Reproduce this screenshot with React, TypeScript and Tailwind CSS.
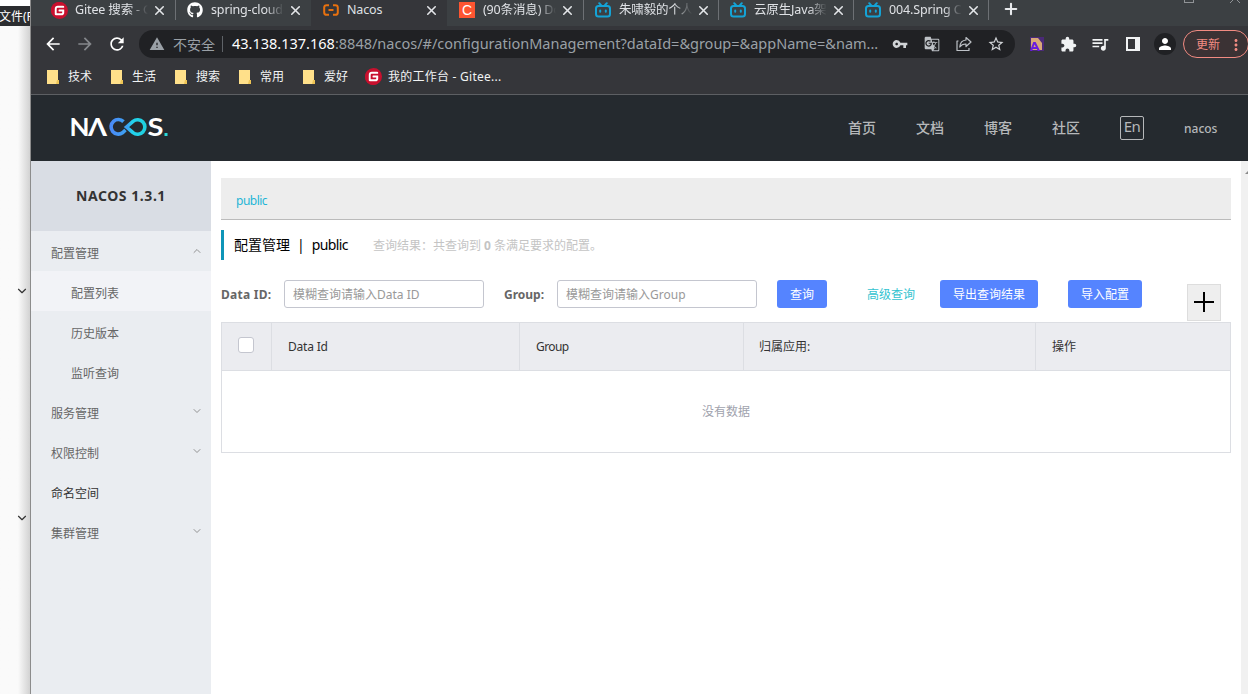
import * as React from "react";
import clsx from "clsx";
import { ChevronDown, ChevronUp, Plus, X } from "lucide-react";
import { FaGithub } from "react-icons/fa";
import {
  MdArrowBack,
  MdArrowForward,
  MdExtension,
  MdGTranslate,
  MdMoreVert,
  MdPerson,
  MdQueueMusic,
  MdRefresh,
  MdStarBorder,
  MdVpnKey,
  MdWarning,
} from "react-icons/md";
import { SiGitee } from "react-icons/si";

function GiteeIcon() {
  return (
    <span className="flex size-4 shrink-0 items-center justify-center rounded-full bg-[#c8102e]">
      <span className="flex size-[13px] items-center justify-center rounded-full bg-white">
        <SiGitee className="size-[17px] shrink-0 text-[#c8102e]" />
      </span>
    </span>
  );
}

function NacosIcon() {
  return (
    <svg viewBox="0 0 16 16" className="size-4 shrink-0" fill="none" stroke="#e8710f" strokeWidth="2">
      <path d="M6 3.2H3.6Q1.2 3.2 1.2 5.6v4.8q0 2.4 2.4 2.4H6M10 3.2h2.4q2.4 0 2.4 2.4v4.8q0 2.4-2.4 2.4H10M5.5 8h5" />
    </svg>
  );
}

function CsdnIcon() {
  return (
    <span className="flex size-4 shrink-0 items-center justify-center bg-[#fc5531] font-['Liberation_Sans'] text-[14px] leading-none text-white">
      C
    </span>
  );
}

function BiliIcon() {
  return (
    <svg viewBox="0 0 16 16" className="size-4 shrink-0" fill="none" stroke="#14a3d6" strokeWidth="2" strokeLinecap="round">
      <rect x="1" y="4" width="14" height="10.5" rx="2.5" />
      <path d="M4.2 1.2 6 3.2M11.8 1.2 10 3.2M5.2 8.4v1.4M10.8 8.4v1.4" />
    </svg>
  );
}

function ShareIcon() {
  return (
    <svg viewBox="0 0 16 16" className="size-4" fill="none" stroke="#bdc1c6" strokeWidth="1.2" strokeLinejoin="round">
      <path d="M2.5 5H1v9.5h12V12" />
      <path d="M10 1.5 15 6l-5 4.5V8Q6 7.8 3.8 11 4.3 4.4 10 4Z" />
    </svg>
  );
}

function FolderIcon() {
  return (
    <svg viewBox="0 0 12 14" className="h-[14px] w-3" fill="#ffe08a">
      <path d="M0 0h11v10h1v4H0Z" />
      <path d="M10 10h2v4h-3Z" fill="#eec455" />
    </svg>
  );
}

function NacosLogo() {
  return (
    <svg viewBox="0 0 98 20" className="mb-[2px] h-5 w-[98px]">
      <defs>
        <linearGradient id="loop" gradientUnits="userSpaceOnUse" x1="37" x2="77" y1="0" y2="0">
          <stop offset="0" stopColor="#4d86f7" />
          <stop offset="0.5" stopColor="#3ba4f2" />
          <stop offset="0.6" stopColor="#22d3ee" />
          <stop offset="1" stopColor="#1ecfdc" />
        </linearGradient>
      </defs>
      <g fill="#fff" fontFamily="Lato, sans-serif" fontWeight="700" fontSize="25">
        <text x="-1.5" y="19" textLength="20" lengthAdjust="spacingAndGlyphs">N</text>
        <text x="17" y="19" textLength="19" lengthAdjust="spacingAndGlyphs">Λ</text>
        <text x="76.5" y="19" textLength="16" lengthAdjust="spacingAndGlyphs">S</text>
      </g>
      <g fill="none" stroke="url(#loop)" strokeWidth="3.6">
        <path d="M52.5 4.6A7.3 7.3 0 1 0 51.5 15.8L54.5 13" />
        <path d="M55.5 10 62 4.3A7.3 7.3 0 1 1 62 15.7Z" />
      </g>
      <rect x="93.5" y="16" width="3" height="3" fill="#2bd9d9" />
    </svg>
  );
}

const tabs: { title: string; icon: React.ReactNode; width: string; active?: boolean; divider?: boolean }[] = [
  { title: "Gitee 搜索 - G", icon: <GiteeIcon />, width: "w-[136px]" },
  { title: "spring-cloud-", icon: <FaGithub className="size-4 shrink-0 text-white" />, width: "w-[136px]", divider: true },
  { title: "Nacos", icon: <NacosIcon />, width: "w-[136px]", active: true },
  { title: "(90条消息) Do", icon: <CsdnIcon />, width: "w-[136px]" },
  { title: "朱啸毅的个人空", icon: <BiliIcon />, width: "w-[135px]", divider: true },
  { title: "云原生Java架构", icon: <BiliIcon />, width: "w-[135px]", divider: true },
  { title: "004.Spring Cl", icon: <BiliIcon />, width: "w-[135px]", divider: true },
];

const bookmarks = ["技术", "生活", "搜索", "常用", "爱好"];

const menu: { title: string; sub?: boolean; active?: boolean; dark?: boolean; arrow?: "up" | "down" }[] = [
  { title: "配置管理", arrow: "up" },
  { title: "配置列表", sub: true, active: true },
  { title: "历史版本", sub: true },
  { title: "监听查询", sub: true },
  { title: "服务管理", arrow: "down" },
  { title: "权限控制", arrow: "down" },
  { title: "命名空间", dark: true },
  { title: "集群管理", arrow: "down" },
];

function TabStrip() {
  return (
    <div className="flex h-[26px] bg-[#3c4043] pl-2">
      {tabs.map((tab) => (
        <div
          key={tab.title}
          className={clsx("relative flex pb-[6px] pl-3", tab.width, tab.active && "bg-[#35363a]")}
        >
          {tab.divider && <span className="absolute top-0 left-0 h-5 w-px bg-[#6d7074]" />}
          <div className="flex h-5 items-center">
            {tab.icon}
            <span
              className={clsx(
                "ml-2 h-5 w-[73px] overflow-hidden text-[12.5px] leading-5 tracking-[-0.15px] whitespace-nowrap text-[#dfe1e5]",
                !tab.active && "mask-r-from-75% mask-r-to-100%"
              )}
            >
              {tab.title}
            </span>
            <X className="ml-1 size-[15px] text-[#e4e6e9]" strokeWidth={2.5} />
          </div>
        </div>
      ))}
      <div className="relative flex h-5 w-[140px] items-center pl-[14px]">
        <span className="absolute top-0 left-0 h-5 w-px bg-[#6d7074]" />
        <Plus className="mb-[2px] size-[18px] text-[#e8eaed]" strokeWidth={2.8} />
      </div>
      {/* lower edges of the window buttons */}
      <div className="ml-[56px] flex h-[3px]">
        <span className="h-[3px] w-[10px] border border-t-0 border-[#909396]" />
        <svg viewBox="0 0 10 3" className="ml-9 h-[3px] w-[10px]" stroke="#909396" fill="none">
          <path d="M0 3 3 0M10 3 7 0" />
        </svg>
      </div>
    </div>
  );
}

function Toolbar() {
  return (
    <div className="flex h-9 items-center bg-[#35363a] pl-3">
      <MdArrowBack className="size-5 shrink-0 text-white" />
      <MdArrowForward className="ml-3 size-5 shrink-0 text-[#85888c]" />
      <MdRefresh className="ml-3 size-5 shrink-0 text-white" />
      <div className="ml-3 flex h-7 w-[876px] shrink-0 items-center rounded-full bg-[#202124] pl-[10px] whitespace-nowrap">
        <MdWarning className="size-4 text-[#9aa0a6]" />
        <span className="ml-2 w-[43px] text-[14px] text-[#9aa0a6]">不安全</span>
        <span className="ml-[6px] h-4 w-px bg-[#5f6368]" />
        <span className="ml-[9px] w-[660px] text-[14.5px] text-[#9aa0a6]">
          <span className="text-white">43.138.137.168</span>
          :8848/nacos/#/configurationManagement?dataId=&amp;group=&amp;appName=&amp;nam...
        </span>
        <MdVpnKey className="size-4 text-[#d0d3d6]" />
        <MdGTranslate className="ml-4 size-4 text-[#bdc1c6]" />
        <span className="ml-4">
          <ShareIcon />
        </span>
        <MdStarBorder className="ml-[15px] size-[18px] text-[#d0d3d6]" />
      </div>
      <svg viewBox="0 0 14 14" className="ml-[15px] size-[14px] shrink-0">
        <rect width="14" height="14" fill="#4b2a78" />
        <path d="M1 1h7l4 5v7H1Z" fill="#d9a878" />
        <path d="M1 14 4 6h1l4 8M2 11h5" fill="none" stroke="#6a1be0" strokeWidth="2" />
      </svg>
      <MdExtension className="ml-4 size-[17px] shrink-0 text-[#f1f3f4]" />
      <MdQueueMusic className="ml-[13px] size-5 shrink-0 text-[#f1f3f4]" />
      <span className="ml-4 h-[14px] w-[14px] shrink-0 border-2 border-r-[5px] border-[#f1f3f4]" />
      <span className="ml-[14px] flex size-[22px] shrink-0 items-center justify-center rounded-full bg-[#202124]">
        <MdPerson className="size-[18px] text-white" />
      </span>
      <span className="ml-[7px] flex h-7 w-[66px] shrink-0 items-center rounded-full border border-[#f28b82] bg-[#3b3234] pt-px pl-3 text-[12px] text-[#f28b82]">
        更新
        <MdMoreVert className="ml-[7px] size-[18px] shrink-0" />
      </span>
    </div>
  );
}

function Bookmarks() {
  return (
    <div className="flex h-[33px] items-center border-b border-[#5d5f63] bg-[#35363a] pb-[3px] pl-4 text-[12px] text-[#f1f3f4]">
      {bookmarks.map((name) => (
        <div key={name} className="flex w-16 items-center gap-[9px]">
          <FolderIcon />
          <span className="pt-px">{name}</span>
        </div>
      ))}
      <span className="-ml-[2px]">
        <GiteeIcon />
      </span>
      <span className="ml-[7px] pt-px tracking-[0.25px] whitespace-nowrap">我的工作台 - Gitee...</span>
    </div>
  );
}

function Header() {
  return (
    <header className="flex h-[66px] items-center bg-[#252a2f] pl-10 text-[14px] text-[#b6b8ba]">
      <NacosLogo />
      <nav className="ml-[679px] flex items-center gap-10 font-medium whitespace-nowrap">
        <span className="pb-[2px]">首页</span>
        <span className="pb-[2px]">文档</span>
        <span className="pb-[2px]">博客</span>
        <span className="pb-[2px]">社区</span>
        <span className="flex size-6 items-center justify-center rounded-[2px] border border-[#b6b8ba] pb-1 text-[15px] font-normal tracking-[-0.5px]">
          En
        </span>
        <span className="pt-[2px] text-[12px]">nacos</span>
      </nav>
    </header>
  );
}

function Sidebar() {
  return (
    <aside className="w-[180px] shrink-0 bg-[#eaedf1] text-[12px]">
      <div className="flex h-[70px] items-center justify-center bg-[#d9dde4] pb-px text-[14px] font-bold tracking-[0.55px] text-[#333]">
        NACOS 1.3.1
      </div>
      {menu.map((item) => (
        <div
          key={item.title}
          className={clsx(
            "flex h-10 items-center justify-between pr-2",
            item.sub ? "pl-10" : "pl-5",
            item.active && "bg-[#f2f3f7]",
            item.dark ? "text-[#333]" : "text-[#666]"
          )}
        >
          <span className="pt-[5px]">{item.title}</span>
          {item.arrow === "up" && <ChevronUp className="size-3 text-[#888]" strokeWidth={1.8} />}
          {item.arrow === "down" && <ChevronDown className="size-3 text-[#888]" strokeWidth={1.8} />}
        </div>
      ))}
    </aside>
  );
}

function SearchBar() {
  const button = "h-7 rounded-[3px] bg-[#5584ff] pt-px text-white";
  const input = "h-7 w-[200px] rounded-[3px] border border-[#c4c6cf] px-2 pt-[2px] placeholder:text-[#999]";
  return (
    <div className="mt-5 flex h-[42px] items-start leading-[30px] text-[#666]">
      <label className="w-[63px] font-bold tracking-[0.25px]">Data ID:</label>
      <input className={input} placeholder="模糊查询请输入Data ID" />
      <label className="ml-5 w-[53px] font-bold">Group:</label>
      <input className={input} placeholder="模糊查询请输入Group" />
      <button className={clsx(button, "ml-5 w-[50px] leading-[26px]")}>查询</button>
      <a className="ml-10 text-[#33c3d0]">高级查询</a>
      <button className={clsx(button, "ml-[25px] w-[98px] leading-[26px]")}>导出查询结果</button>
      <button className={clsx(button, "ml-[30px] w-[74px] leading-[26px]")}>导入配置</button>
      <button className="mt-1 ml-[45px] flex h-[37px] w-[34px] items-center justify-center border border-[#ddd] bg-[#eee] pb-[2px] text-black">
        <svg viewBox="0 0 20 20" className="size-5" stroke="currentColor" strokeWidth="2">
          <path d="M0 10h20M10 0v20" />
        </svg>
      </button>
    </div>
  );
}

function ConfigTable() {
  return (
    <div className="h-[131px] w-[1010px] border border-[#dcdee3]">
      <div className="flex h-[47px] bg-[#ebecf0] leading-[48px] text-[#333]">
        <div className="w-[50px] border-r border-[#dcdee3] pt-[14px] pl-4">
          <span className="block size-4 rounded-[3px] border border-[#c4c6cf] bg-white" />
        </div>
        <div className="w-[248px] border-r border-[#dcdee3] pl-4 tracking-[-0.2px]">Data Id</div>
        <div className="w-[224px] border-r border-[#dcdee3] pl-4 tracking-[-0.6px]">Group</div>
        <div className="w-[292px] border-r border-[#dcdee3] pl-[15px]">归属应用:</div>
        <div className="pl-4">操作</div>
      </div>
      <div className="h-[82px] border-t border-[#dcdee3] text-center leading-[81px] text-[#a0a2ad]">没有数据</div>
    </div>
  );
}

export default function App() {
  return (
    <div className="flex h-[694px] w-[1248px] overflow-hidden bg-white font-['Noto_Sans','Noto_Sans_CJK_SC',sans-serif]">
      {/* window behind the browser */}
      <div className="w-[30px] shrink-0 bg-linear-to-r from-[#fafafa] from-60% to-[#d2d2d2]">
        <div className="h-[6px] bg-white" />
        <div className="flex h-5 items-center overflow-hidden bg-[#2b2d30] pt-[2px]">
          <span className="-ml-px text-[12px] whitespace-nowrap text-white">文件(F)</span>
        </div>
        <ChevronDown className="mt-[258px] ml-[15px] size-[14px] text-[#333]" />
        <ChevronDown className="mt-[213px] ml-[15px] size-[14px] text-[#333]" />
      </div>

      <div className="w-[1218px] shrink-0 border-l border-[#8c8c8c]">
        <TabStrip />
        <Toolbar />
        <Bookmarks />
        <Header />
        <div className="flex h-[533px]">
          <Sidebar />
          <main className="flex-1 pt-[17px] pl-[10px] text-[12px]">
            <div className="h-[42px] w-[1010px] border-b border-[#bbb] bg-[#ededed] pl-[15px] leading-[45px] tracking-[-0.5px] text-[#1fb5d6]">
              public
            </div>
            <div className="mt-[10px] flex h-[30px] items-center border-l-[3px] border-[#0f95b8] pb-px pl-[10px] text-[14px] text-black">
              <span>配置管理</span>
              <span className="mx-[7px]">|</span>
              <span className="tracking-[-0.6px]">public</span>
              <span className="ml-[25px] pt-[2px] text-[12px] text-[#c4c4c4]">
                查询结果：共查询到 <b>0</b> 条满足要求的配置。
              </span>
            </div>
            <SearchBar />
            <ConfigTable />
          </main>
          <div className="w-[7px] shrink-0 bg-[#f1f1f1]">
            <svg viewBox="0 0 7 4" className="mt-[9px] h-1 w-[7px]" fill="#8a8a8a">
              <path d="M4 4 7 1v3Z" />
            </svg>
          </div>
        </div>
      </div>
    </div>
  );
}
